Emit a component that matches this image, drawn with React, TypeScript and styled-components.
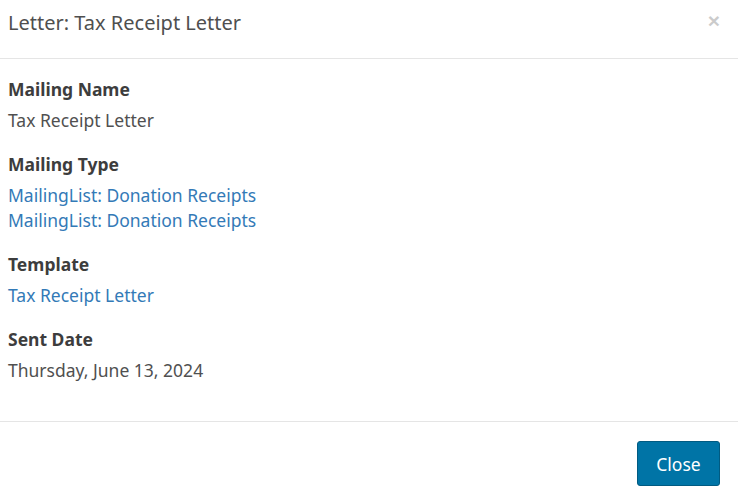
import React from "react";
import styled, { createGlobalStyle } from "styled-components";

const GlobalStyle = createGlobalStyle`
    html, body {
        margin: 0;
        padding: 0;
        background: #fff;
    }
    body {
        font-family: "Noto Sans", "Open Sans", sans-serif;
        color: #4a4a4a;
    }
`;

interface Field {
    label: string;
    values: string[];
    link?: boolean;
}

const fields: Field[] = [
    { label: "Mailing Name", values: ["Tax Receipt Letter"] },
    { label: "Mailing Type", values: ["MailingList: Donation Receipts", "MailingList: Donation Receipts"], link: true },
    { label: "Template", values: ["Tax Receipt Letter"], link: true },
    { label: "Sent Date", values: ["Thursday, June 13, 2024"] },
];

const App: React.FC = () => {
    return (
        <>
            <GlobalStyle />
            <Modal>
                <Header>
                    <Title>Letter: Tax Receipt Letter</Title>
                    <CloseX aria-label="Close">&times;</CloseX>
                </Header>
                <Body>
                    {fields.map(({ label, values, link }) =>
                        <Group key={label}>
                            <Label>{label}</Label>
                            <Values>
                                {values.map((v, i) =>
                                    <Value key={i} as={link ? "a" : "div"} href={link ? "#" : undefined} $link={link}>{v}</Value>
                                )}
                            </Values>
                        </Group>
                    )}
                </Body>
                <Footer>
                    <CloseButton>Close</CloseButton>
                </Footer>
            </Modal>
        </>
    );
};

const Modal = styled.div`
    width: 738px;
    height: 501px;
    display: flex;
    flex-direction: column;
    background: #fff;
`;

const Header = styled.div`
    display: flex;
    align-items: flex-start;
    justify-content: space-between;
    padding: 9px 18px 21px 8px;
    border-bottom: 1px solid #e5e5e5;
`;

const Title = styled.h4`
    margin: 0;
    font-size: 20px;
    line-height: 28px;
    font-weight: 400;
    color: #4f4f4f;
`;

const CloseX = styled.button`
    border: 0;
    background: transparent;
    padding: 0;
    margin-top: 1px;
    font-family: "Liberation Sans", sans-serif;
    font-size: 21px;
    line-height: 21px;
    font-weight: 700;
    color: #000;
    opacity: 0.2;
    cursor: pointer;
`;

const Body = styled.div`
    flex: 1;
    display: flex;
    flex-direction: column;
    gap: 19px;
    padding: 18px 8px;
`;

const Group = styled.div`
    display: flex;
    flex-direction: column;
    gap: 6px;
`;

const Label = styled.div`
    font-size: 17.5px;
    line-height: 25px;
    font-weight: 700;
    color: #3d3d3d;
`;

const Values = styled.div`
    display: flex;
    flex-direction: column;
`;

const Value = styled.div<{ $link?: boolean }>`
    font-size: 17.5px;
    line-height: 25px;
    color: ${p => p.$link ? "#337ab7" : "#505050"};
    text-decoration: none;
`;

const Footer = styled.div`
    display: flex;
    justify-content: flex-end;
    padding: 19px 18px 15px;
    border-top: 1px solid #e5e5e5;
`;

const CloseButton = styled.button`
    width: 83px;
    height: 45px;
    border: 1px solid #015b82;
    border-radius: 3px;
    background: #0074a6;
    color: #fff;
    font-family: "Noto Sans", "Open Sans", sans-serif;
    font-size: 17.5px;
    cursor: pointer;
`;

export default App;
